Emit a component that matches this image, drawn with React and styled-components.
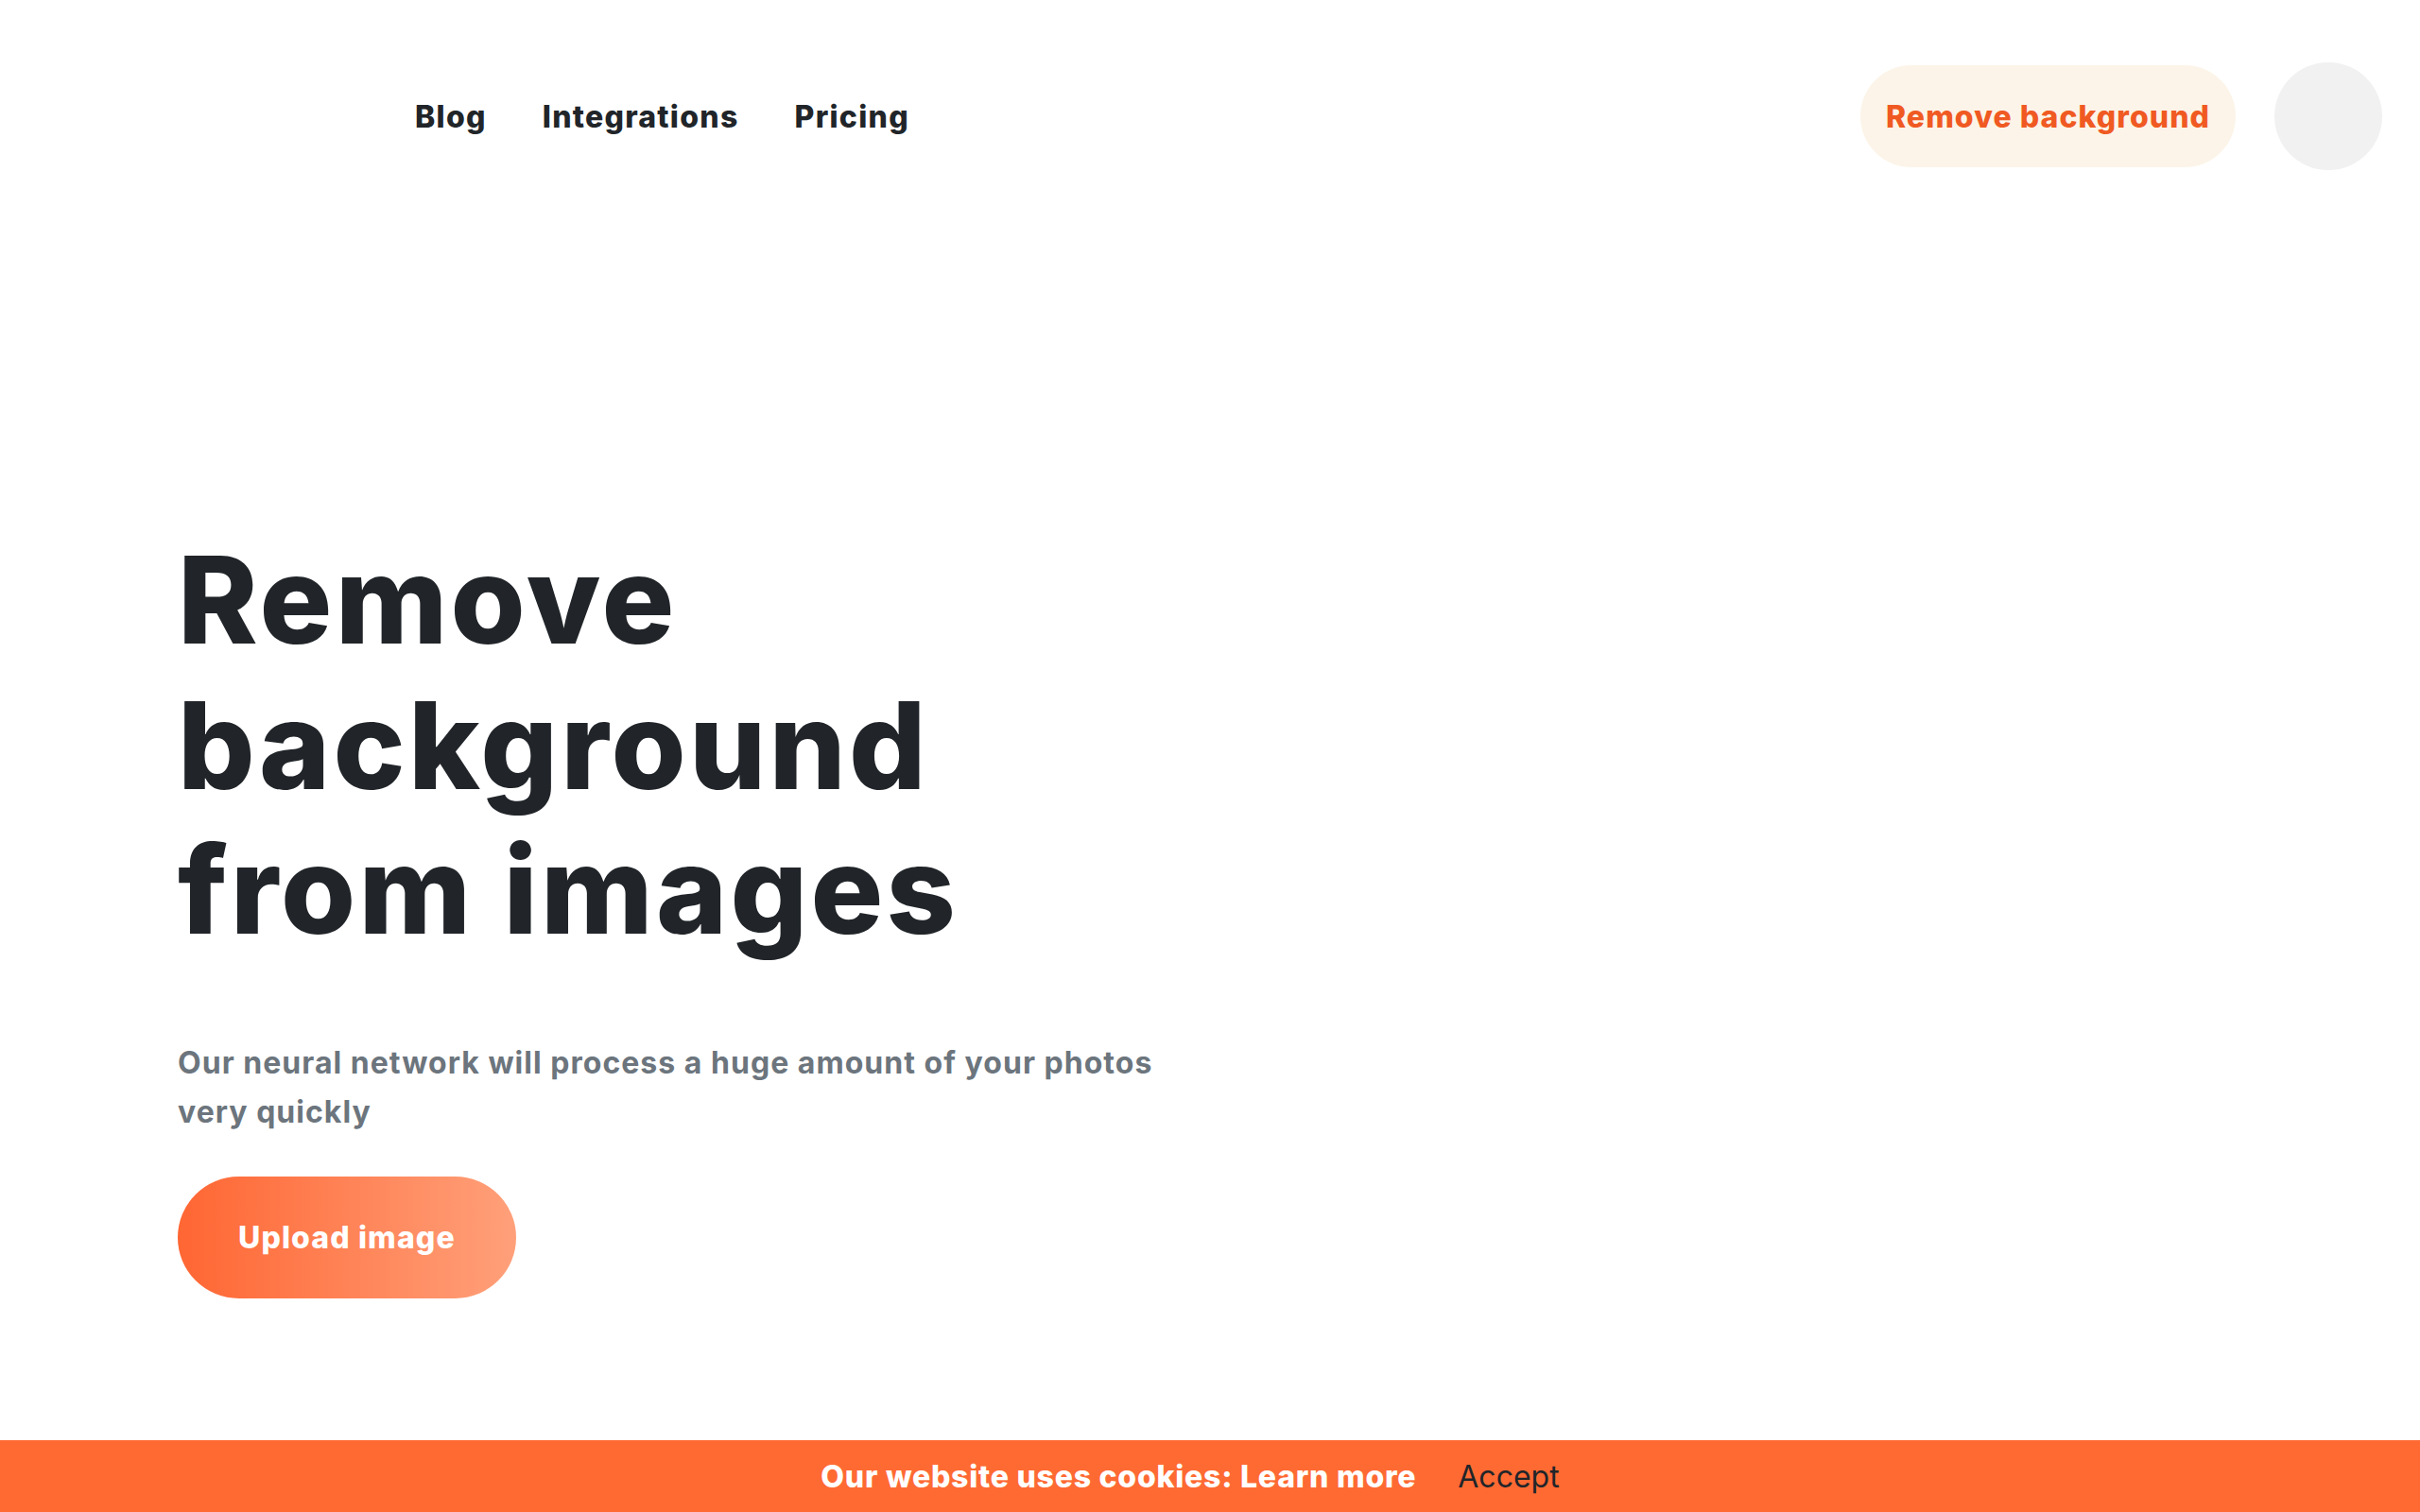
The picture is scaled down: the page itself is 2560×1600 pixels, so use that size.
import React from 'react'
import styled, {createGlobalStyle} from 'styled-components'

const GlobalStyle = createGlobalStyle`
  html, body {
    margin: 0;
    padding: 0;
    background: #ffffff;
    font-family: Inter, 'Noto Sans', sans-serif;
  }
  * { box-sizing: border-box; }
`

const App = () => {
  return (
    <Page>
      <GlobalStyle />
      <Header>
        <LogoSpot />
        <Nav>
          <NavLink href="#">Blog</NavLink>
          <NavLink href="#">Integrations</NavLink>
          <NavLink href="#">Pricing</NavLink>
        </Nav>
        <HeaderRight>
          <PillButton>Remove background</PillButton>
          <Avatar />
        </HeaderRight>
      </Header>

      <Hero>
        <Title>
          Remove
          <br />
          background
          <br />
          from images
        </Title>
        <Lead>Our neural network will process a huge amount of your photos very quickly</Lead>
        <UploadButton>Upload image</UploadButton>
      </Hero>

      <CookieBar>
        <CookieText>Our website uses cookies: Learn more</CookieText>
        <AcceptButton>Accept</AcceptButton>
      </CookieBar>
    </Page>
  )
}

const Page = styled.div`
  display: flex;
  flex-direction: column;
  min-height: 100vh;
  color: #212529;
`

const Header = styled.header`
  display: flex;
  align-items: center;
  height: 180px;
  padding: 66px 40px 0 188px;
`

const LogoSpot = styled.div`
  width: 191px;
  height: 60px;
`

const Nav = styled.nav`
  display: flex;
  align-items: center;
  gap: 59px;
  margin-left: 60px;
`

const NavLink = styled.a`
  font-size: 32px;
  font-weight: 800;
  letter-spacing: 0.04em;
  color: #212529;
  text-decoration: none;
`

const HeaderRight = styled.div`
  display: flex;
  align-items: center;
  gap: 41px;
  margin-left: auto;
`

const PillButton = styled.button`
  height: 108px;
  padding: 0 27px;
  border: none;
  border-radius: 54px;
  background: #fcf4e8;
  color: #f05a22;
  font-family: Inter, sans-serif;
  font-size: 32px;
  font-weight: 800;
  letter-spacing: 0.033em;
  cursor: pointer;
`

const Avatar = styled.div`
  width: 114px;
  height: 114px;
  border-radius: 50%;
  background: #f2f1f2;
`

const Hero = styled.main`
  flex: 1;
  display: flex;
  flex-direction: column;
  align-items: flex-start;
  padding: 378px 0 0 188px;
`

const Title = styled.h1`
  margin: 0;
  font-size: 128px;
  line-height: 1.2;
  font-weight: 800;
  letter-spacing: 0.025em;
  color: #212529;
`

const Lead = styled.p`
  margin: 80px 0 0;
  max-width: 1060px;
  font-size: 32px;
  line-height: 52px;
  font-weight: 700;
  letter-spacing: 0.032em;
  color: #6c757d;
`

const UploadButton = styled.button`
  margin-top: 42px;
  height: 129px;
  padding: 0 64px;
  border: none;
  border-radius: 65px;
  background: linear-gradient(90deg, #ff6633 0%, #ffa07a 100%);
  color: #ffffff;
  font-family: Inter, sans-serif;
  font-size: 32px;
  font-weight: 800;
  letter-spacing: 0.035em;
  cursor: pointer;
`

const CookieBar = styled.div`
  display: flex;
  align-items: center;
  justify-content: center;
  height: 76px;
  padding-right: 42px;
  background: #ff6a33;
`

const CookieText = styled.span`
  font-size: 32px;
  font-weight: 800;
  letter-spacing: 0.024em;
  color: #ffffff;
`

const AcceptButton = styled.button`
  margin-left: 44px;
  padding: 0;
  border: none;
  background: transparent;
  color: #212529;
  font-family: Inter, sans-serif;
  font-size: 32px;
  font-weight: 400;
  cursor: pointer;
`

export default App
